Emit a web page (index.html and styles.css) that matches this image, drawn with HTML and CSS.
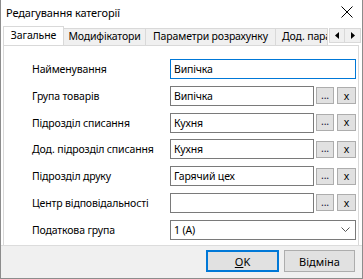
FILE: index.html
```html
<!DOCTYPE html>
<html lang="uk">
  <head>
    <meta charset="UTF-8" />
    <title>Редагування категорії</title>
    <link rel="stylesheet" href="styles.css">
  </head>
  <body>
    <div class="window">
      <div class="titlebar">
        <span class="title">Редагування категорії</span>
        <svg class="close" width="12" height="12" viewBox="0 0 12 12">
          <path d="M0.5 0.5 L11.5 11.5 M11.5 0.5 L0.5 11.5" stroke="#000" stroke-width="1" fill="none" />
        </svg>
      </div>

      <div class="tabs">
        <div class="tab tab-general active">Загальне</div>
        <div class="tab tab-mods">Модифікатори</div>
        <div class="tab tab-calc">Параметри розрахунку</div>
        <div class="tab tab-extra">Дод. параметри</div>
        <div class="tab-scroll">
          <span class="arrow">
            <svg width="4" height="7" viewBox="0 0 4 7"><path d="M4 0 L0 3.5 L4 7 Z" fill="#000" /></svg>
          </span>
          <span class="arrow">
            <svg width="4" height="7" viewBox="0 0 4 7"><path d="M0 0 L4 3.5 L0 7 Z" fill="#000" /></svg>
          </span>
        </div>
      </div>

      <div class="panel">
        <div class="form">
          <label>Найменування</label>
          <div class="field">
            <div class="input focused">Випічка</div>
          </div>

          <label>Група товарів</label>
          <div class="field">
            <div class="input">Випічка</div>
            <span class="pick">...</span>
            <span class="clear">x</span>
          </div>

          <label>Підрозділ списання</label>
          <div class="field">
            <div class="input">Кухня</div>
            <span class="pick">...</span>
            <span class="clear">x</span>
          </div>

          <label>Дод. підрозділ списання</label>
          <div class="field">
            <div class="input">Кухня</div>
            <span class="pick">...</span>
            <span class="clear">x</span>
          </div>

          <label>Підрозділ друку</label>
          <div class="field">
            <div class="input">Гарячий цех</div>
            <span class="pick">...</span>
            <span class="clear">x</span>
          </div>

          <label>Центр відповідальності</label>
          <div class="field">
            <div class="input"></div>
            <span class="pick">...</span>
            <span class="clear">x</span>
          </div>

          <label>Податкова група</label>
          <div class="field">
            <div class="input select">
              <span>1 (А)</span>
              <svg width="9" height="5" viewBox="0 0 9 5"><path d="M0.5 0.5 L4.5 4.5 L8.5 0.5" stroke="#555" fill="none" /></svg>
            </div>
          </div>
        </div>
      </div>

      <div class="footer">
        <button class="btn default"><u>O</u>K</button>
        <button class="btn">Відміна</button>
      </div>
    </div>
  </body>
</html>
```

FILE: styles.css
```css
* {
  margin: 0;
  padding: 0;
  box-sizing: border-box;
}
body {
  background-color: #fff;
  font-family: "Noto Sans", sans-serif;
  font-size: 10.5px;
  letter-spacing: -0.15px;
  color: #000;
}
.window {
  width: 363px;
  height: 279px;
  border: 1px solid #8c8c8c;
  border-top: none;
  display: flex;
  flex-direction: column;
  background-color: #fff;
}
.titlebar {
  height: 26px;
  display: flex;
  align-items: center;
  justify-content: space-between;
  padding: 0 9px 2px 5px;
}
.title {
  font-size: 11px;
}
.tabs {
  height: 19px;
  display: flex;
  align-items: flex-end;
  padding-left: 2px;
  position: relative;
  overflow: hidden;
}
.tab {
  flex-shrink: 0;
  height: 17px;
  background-color: #f0f0f0;
  border: 1px solid #d9d9d9;
  border-bottom: none;
  margin-left: -1px;
  line-height: 15px;
  white-space: nowrap;
  text-align: center;
  overflow: hidden;
}
.tab.active {
  height: 19px;
  background-color: #fff;
  margin-left: 0;
  position: relative;
  z-index: 1;
  line-height: 17px;
}
.tab-general {
  width: 61px;
}
.tab-mods {
  width: 83px;
}
.tab-calc {
  width: 131px;
}
.tab-extra {
  width: 53px;
  text-align: left;
  padding-left: 6px;
}
.tab-scroll {
  position: absolute;
  right: 1px;
  top: 2px;
  display: flex;
  background-color: #fff;
}
.arrow {
  width: 16px;
  height: 15px;
  border: 1px solid #d9d9d9;
  background-color: #f0f0f0;
  display: flex;
  align-items: center;
  justify-content: center;
}
.arrow + .arrow {
  border-left: none;
}
.panel {
  flex: 1;
  margin: 0 3px 0 2px;
  border: 1px solid #d9d9d9;
  border-bottom: none;
  padding: 13px 2px 0 28px;
}
.form {
  display: grid;
  grid-template-columns: 138px 1fr;
  row-gap: 6.8px;
  align-items: center;
}
.form label {
  white-space: nowrap;
}
.field {
  display: flex;
  align-items: center;
  gap: 2px;
}
.input {
  flex: 1;
  height: 20px;
  border: 1px solid #7a7a7a;
  padding: 0 3px;
  line-height: 18px;
  white-space: nowrap;
}
.input.focused {
  border-color: #0078d7;
}
.select {
  display: flex;
  align-items: center;
  justify-content: space-between;
  padding-right: 5px;
}
.pick,
.clear {
  height: 17px;
  border: 1px solid #adadad;
  background-color: #e1e1e1;
  display: flex;
  align-items: center;
  justify-content: center;
  line-height: 1;
}
.pick {
  width: 18px;
  color: #1a1a40;
  padding-bottom: 2px;
}
.clear {
  width: 19px;
  margin-left: 1px;
}
.footer {
  height: 33px;
  background-color: #f0f0f0;
  border-top: 1px solid #dcdcdc;
  display: flex;
  justify-content: flex-end;
  align-items: center;
  gap: 5px;
  padding: 0 7px 2px 0;
}
.btn {
  width: 73px;
  height: 22px;
  background-color: #e1e1e1;
  border: 1px solid #adadad;
  font-family: "Noto Sans", sans-serif;
  font-size: 11px;
  color: #000;
}
.btn.default {
  border: 2px solid #0078d7;
}
.btn + .btn {
  width: 71px;
}
```
